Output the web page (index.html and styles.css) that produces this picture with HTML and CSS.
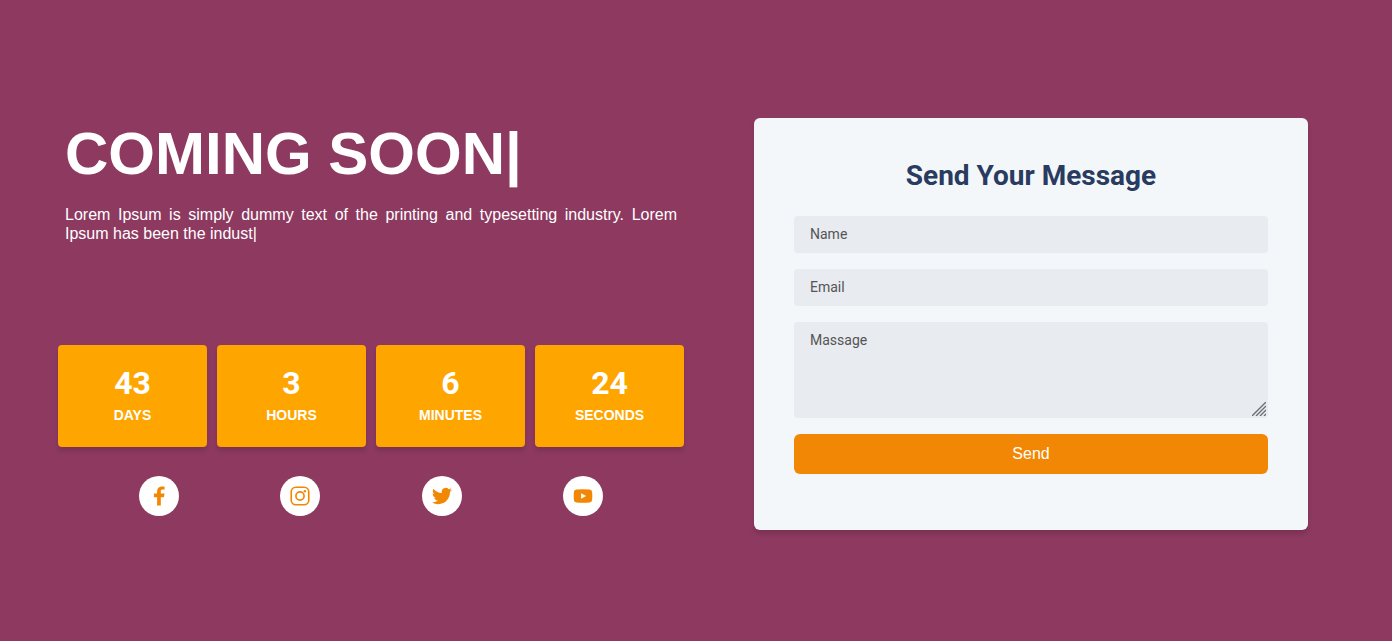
FILE: index.html
```
<!DOCTYPE html>
<html lang="en">
<head>
    <meta charset="UTF-8">
    <meta name="viewport" content="width=device-width, initial-scale=1.0">
    <title>Coming Soon</title>
    <link rel="stylesheet" href="styles.css">
</head>
<body>
    <main class="container">
        <section class="left">
            <div class="intro">
                <h1>COMING SOON|</h1>
                <p>Lorem Ipsum is simply dummy text of the printing and typesetting industry. Lorem Ipsum has been the indust|</p>
            </div>
            <div class="countdown">
                <div class="box">
                    <span class="number">43</span>
                    <span class="unit">DAYS</span>
                </div>
                <div class="box">
                    <span class="number">3</span>
                    <span class="unit">HOURS</span>
                </div>
                <div class="box">
                    <span class="number">6</span>
                    <span class="unit">MINUTES</span>
                </div>
                <div class="box">
                    <span class="number">24</span>
                    <span class="unit">SECONDS</span>
                </div>
            </div>
            <nav class="social">
                <a href="#" aria-label="Facebook">
                    <svg viewBox="1.5 1.5 21 21"><path d="M13.9 22v-8.6h3.3l.6-3.900h-3.900V7.200c0-1.100.5-1.900 2-1.900h2V2.200c-.6-.1-1.600-.2-2.600-.2-3.200 0-5.300 1.900-5.300 4.900v2.600H6.700v3.900H10V22z"/></svg>
                </a>
                <a href="#" aria-label="Instagram">
                    <svg viewBox="0 0 24 24"><rect class="line" x="1.5" y="1.5" width="21" height="21" rx="5.5"/><circle class="line" cx="12" cy="12" r="4.9"/><circle cx="17.8" cy="6.2" r="1.5"/></svg>
                </a>
                <a href="#" aria-label="Twitter">
                    <svg viewBox="0 0 24 24"><path d="M23.95 4.57a10 10 0 0 1-2.82.77 4.96 4.96 0 0 0 2.16-2.72c-.95.55-2 .96-3.13 1.18a4.92 4.92 0 0 0-8.38 4.48C7.69 8.09 4.07 6.13 1.64 3.16a4.82 4.82 0 0 0-.67 2.48c0 1.71.87 3.21 2.19 4.1a4.9 4.9 0 0 1-2.23-.62v.06a4.92 4.92 0 0 0 3.95 4.83 5 5 0 0 1-2.21.08 4.94 4.94 0 0 0 4.6 3.42A9.87 9.87 0 0 1 0 19.54a13.99 13.99 0 0 0 7.55 2.21c9.05 0 14-7.5 14-13.98 0-.21 0-.42-.02-.63a9.94 9.94 0 0 0 2.46-2.55z"/></svg>
                </a>
                <a href="#" aria-label="YouTube">
                    <svg viewBox="0 0 24 24"><path fill-rule="evenodd" d="M4 4.3Q12 3.5 20 4.3 22.6 4.5 22.900 7 23.5 12 22.900 17 22.6 19.5 20 19.7 12 20.5 4 19.7 1.4 19.5 1.1 17 .5 12 1.1 7 1.4 4.5 4 4.3zM9.7 8.600v6.8l6-3.4z"/></svg>
                </a>
            </nav>
        </section>
        <form class="message-form">
            <h2>Send Your Message</h2>
            <input type="text" name="name" placeholder="Name" aria-label="Name">
            <input type="email" name="email" placeholder="Email" aria-label="Email">
            <div class="area">
                <textarea name="message" placeholder="Massage" aria-label="Massage"></textarea>
                <svg class="grip" viewBox="0 0 14 14"><path d="M0 14L14 0M4 14L14 4M8 14L14 8M12 14L14 12"/></svg>
            </div>
            <button type="submit">Send</button>
        </form>
    </main>
</body>
</html>
```
FILE: styles.css
```
* {
    box-sizing: border-box;
    margin: 0;
    padding: 0;
}
body {
    background-color: #8d3960;
    color: #fff;
    font-family: "Liberation Sans", Arial, sans-serif;
    font-size: 16px;
}
.container {
    display: grid;
    grid-template-columns: 1.13fr 1fr;
    gap: 70px;
    padding: 118px 84px 40px 58px;
}
.intro {
    height: 227px;
    padding: 2px 7px 0;
}
h1 {
    font-size: 60px;
    line-height: 68px;
    margin-bottom: 17px;
}
.intro p {
    line-height: 19px;
    text-align: justify;
}
.countdown {
    display: grid;
    grid-template-columns: repeat(4, 1fr);
    gap: 10px;
}
.box {
    display: flex;
    flex-direction: column;
    align-items: center;
    padding: 20px 10px 22px;
    background-color: #ffa500;
    border-radius: 4px;
    box-shadow: 0 4px 4px rgba(0, 0, 0, 0.12);
    font-weight: bold;
}
.number {
    font-family: Roboto, sans-serif;
    font-size: 32px;
    line-height: 36px;
    margin-bottom: 4px;
}
.unit {
    font-size: 14px;
    line-height: 20px;
}
.social {
    display: flex;
    justify-content: space-around;
    padding: 0 30px;
    margin-top: 29px;
}
.social a {
    display: flex;
    justify-content: center;
    align-items: center;
    width: 40px;
    height: 40px;
    background-color: #fff;
    border-radius: 50%;
}
.social svg {
    width: 20px;
    height: 20px;
    fill: #f28705;
}
.social .line {
    fill: none;
    stroke: #f28705;
    stroke-width: 2;
}
.message-form {
    display: flex;
    flex-direction: column;
    gap: 16px;
    align-self: start;
    padding: 40px 40px 56px;
    background-color: #f3f7fa;
    border-radius: 6px;
    box-shadow: 0 4px 4px rgba(0, 0, 0, 0.12);
}
h2 {
    color: #293b5f;
    font-family: Roboto, sans-serif;
    font-size: 28px;
    line-height: 36px;
    margin-bottom: 6px;
    text-align: center;
}
input,
textarea {
    display: block;
    width: 100%;
    padding: 10px 16px;
    border: none;
    outline: none;
    border-radius: 4px;
    background-color: #e8ebf0;
    color: #555;
    font-family: Roboto, sans-serif;
    font-size: 14px;
    line-height: 17px;
}
input {
    height: 37px;
    padding: 9px 16px 11px;
}
textarea {
    height: 96px;
    resize: vertical;
}
textarea::-webkit-resizer {
    background: transparent;
}
::placeholder {
    color: #555;
}
.area {
    position: relative;
}
/* resize handle in the corner of the textarea */
.grip {
    position: absolute;
    right: 2px;
    bottom: 2px;
    width: 14px;
    height: 14px;
    fill: none;
    stroke: #6d6f75;
    stroke-width: 1.4;
    pointer-events: none;
}
button {
    height: 40px;
    border: none;
    border-radius: 6px;
    background-color: #f28705;
    color: #fff;
    font-family: "Liberation Sans", Arial, sans-serif;
    font-size: 16px;
    cursor: pointer;
}
```
